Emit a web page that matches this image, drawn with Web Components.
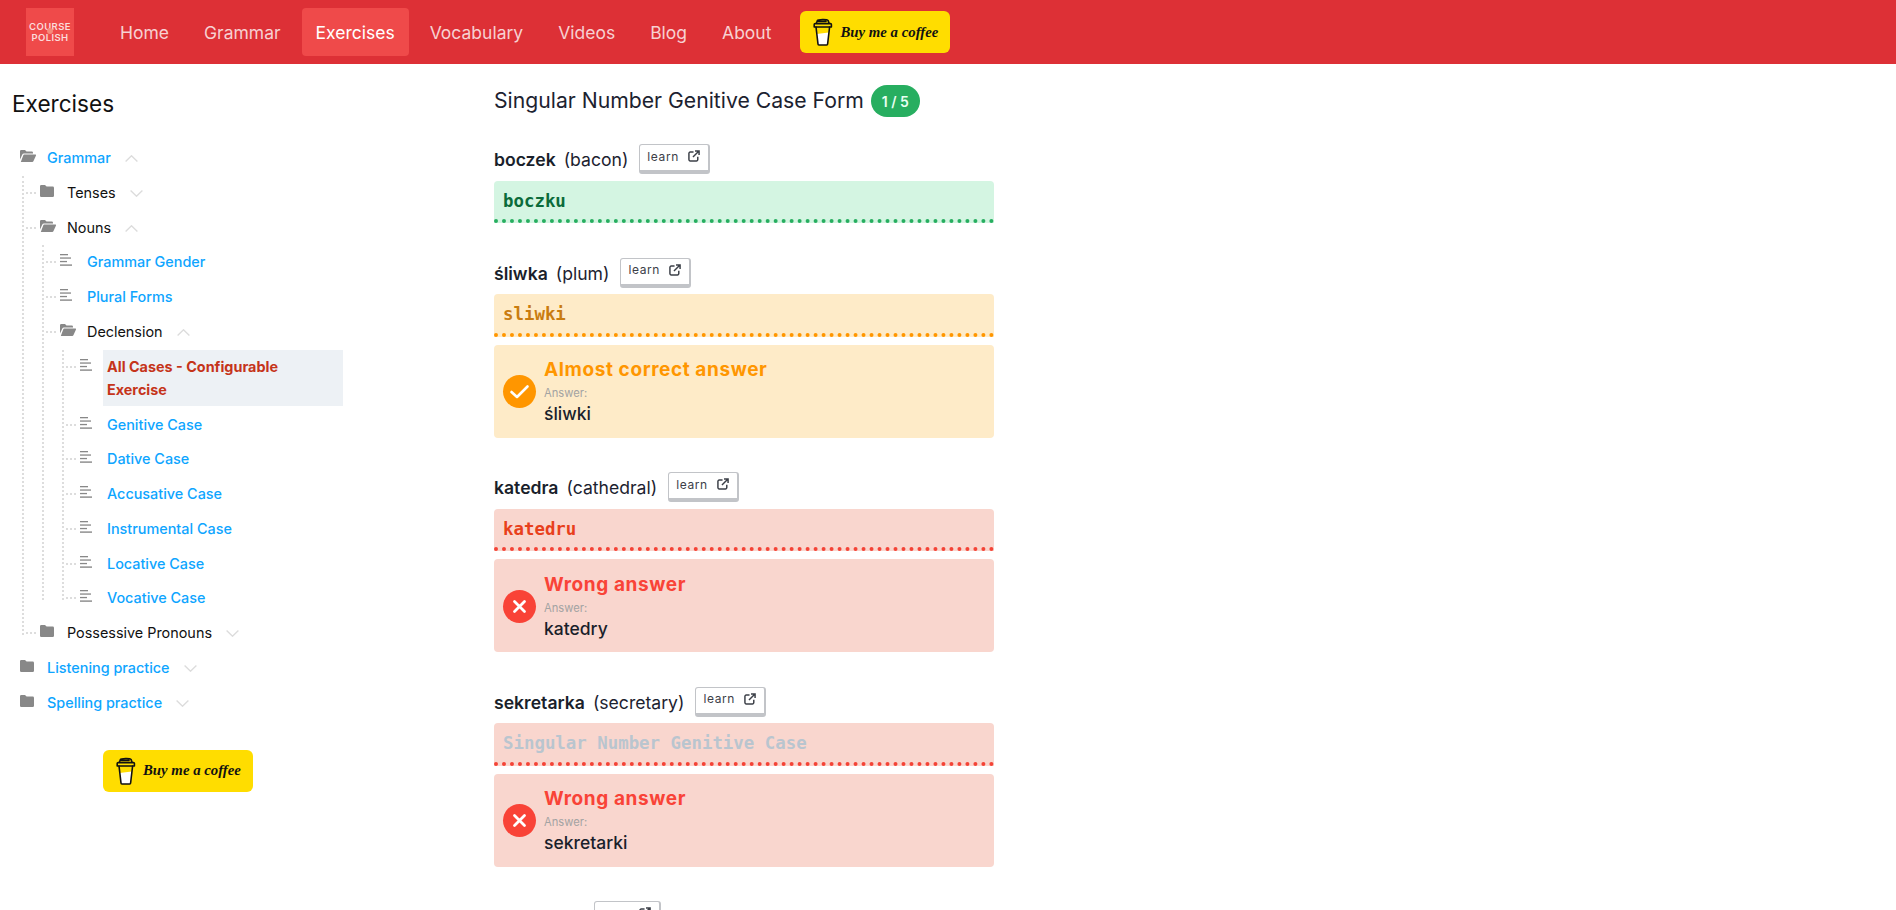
<!DOCTYPE html>
<html lang="en">
<head>
<meta charset="utf-8">
<title>Exercises - Course of Polish</title>
<style>
  html, body { margin: 0; padding: 0; background: #fff; }
  body { font-family: Inter, "Noto Sans", sans-serif; color: #1c2230; }
</style>
</head>
<body>
<app-page>
  <app-header slot="header">
    <nav-link>Home</nav-link>
    <nav-link>Grammar</nav-link>
    <nav-link active>Exercises</nav-link>
    <nav-link>Vocabulary</nav-link>
    <nav-link>Videos</nav-link>
    <nav-link>Blog</nav-link>
    <nav-link>About</nav-link>
  </app-header>

  <side-bar slot="side">
    <tree-node label="Grammar" link open root>
      <tree-node label="Tenses"></tree-node>
      <tree-node label="Nouns" open>
        <tree-node label="Grammar Gender" type="file" link></tree-node>
        <tree-node label="Plural Forms" type="file" link></tree-node>
        <tree-node label="Declension" open>
          <tree-node label="All Cases - Configurable Exercise" type="file" active></tree-node>
          <tree-node label="Genitive Case" type="file" link></tree-node>
          <tree-node label="Dative Case" type="file" link></tree-node>
          <tree-node label="Accusative Case" type="file" link></tree-node>
          <tree-node label="Instrumental Case" type="file" link></tree-node>
          <tree-node label="Locative Case" type="file" link></tree-node>
          <tree-node label="Vocative Case" type="file" link></tree-node>
        </tree-node>
      </tree-node>
      <tree-node label="Possessive Pronouns"></tree-node>
    </tree-node>
    <tree-node label="Listening practice" link root></tree-node>
    <tree-node label="Spelling practice" link root></tree-node>
  </side-bar>

  <exercise-list slot="main" title="Singular Number Genitive Case Form" progress="1 / 5">
    <exercise-item word="boczek" meaning="bacon" value="boczku" status="ok"></exercise-item>
    <exercise-item word="śliwka" meaning="plum" value="sliwki" status="almost" answer="śliwki"></exercise-item>
    <exercise-item word="katedra" meaning="cathedral" value="katedru" status="wrong" answer="katedry"></exercise-item>
    <exercise-item word="sekretarka" meaning="secretary" placeholder="Singular Number Genitive Case" status="wrong" answer="sekretarki"></exercise-item>
    <exercise-item style="--head-width: 89px; --learn-width: 67px"></exercise-item>
  </exercise-list>
</app-page>

<script>
const cupIcon = `
  <svg width="20" height="28" viewBox="0 0 20 28" fill="none" stroke="#111" stroke-width="1.6" stroke-linejoin="round" stroke-linecap="round">
    <path d="M3.5 16 L15.8 14.5 L14.6 26 a1 1 0 0 1 -1 1 H6 a1 1 0 0 1 -1 -1 Z" fill="#fff" stroke="none"/>
    <path d="M3 9 L5 26 a1 1 0 0 0 1 1 H13.6 a1 1 0 0 0 1 -1 L16.6 9"/>
    <path d="M1.2 9 H18.4 V6.6 a1 1 0 0 0 -1 -1 H2.2 a1 1 0 0 0 -1 1 Z"/>
    <path d="M3.5 5 L4.5 2.4 C5 1.4 14 1 15 2.4 L16 5 M5.5 3.4 H13"/>
  </svg>`;

class BuyCoffee extends HTMLElement {
  constructor() {
    super();
    this.attachShadow({ mode: "open" });
    this.shadowRoot.innerHTML = `
    <style>
      :host {
        display: inline-flex;
        align-items: center;
        gap: 7px;
        box-sizing: border-box;
        width: 150px;
        height: 42px;
        padding-left: 13px;
        background: #ffdd00;
        border-radius: 6px;
      }
      svg { display: block; flex: none; }
      span {
        font: italic 700 14.8px/1 "Liberation Serif", serif;
        color: #111;
        white-space: nowrap;
      }
    </style>
    ${cupIcon}<span>Buy me a coffee</span>`;
  }
}

class NavLink extends HTMLElement {
  constructor() {
    super();
    this.attachShadow({ mode: "open" });
    this.shadowRoot.innerHTML = `
    <style>
      :host {
        display: flex;
        align-items: center;
        height: 48px;
        padding: 0 14px;
        border-radius: 4px;
        font-size: 17.5px;
        color: rgba(255, 255, 255, 0.78);
      }
      :host([active]) {
        background: #ef4a4a;
        color: #fff;
      }
    </style>
    <slot></slot>`;
  }
}

class AppHeader extends HTMLElement {
  constructor() {
    super();
    this.attachShadow({ mode: "open" });
    this.shadowRoot.innerHTML = `
    <style>
      :host {
        display: flex;
        align-items: center;
        box-sizing: border-box;
        height: 64px;
        padding-left: 26px;
        background: #dd3036;
      }
      .logo {
        display: flex;
        flex-direction: column;
        align-items: center;
        justify-content: center;
        width: 48px;
        height: 48px;
        margin-right: 32px;
        background: #ef4a4a;
        color: #fbdcdc;
        font-size: 9.5px;
        font-weight: 600;
        line-height: 11px;
        letter-spacing: 0.4px;
        position: relative;
      }
      .logo i {
        position: absolute;
        left: 21px;
        top: 20px;
        width: 6px;
        height: 6px;
        border-radius: 50%;
        background: #f58a7a;
      }
      nav { display: flex; gap: 7px; }
      buy-coffee { margin-left: 15px; }
    </style>
    <div class="logo"><span>COURSE</span><i></i><span>POLISH</span></div>
    <nav><slot></slot></nav>
    <buy-coffee></buy-coffee>`;
  }
}

const folderClosed = `<svg width="14" height="12" viewBox="0 0 14 12" fill="#888"><path d="M1.3 0 H5 L6.6 1.6 H12.7 A1.3 1.3 0 0 1 14 2.9 V10.7 A1.3 1.3 0 0 1 12.7 12 H1.3 A1.3 1.3 0 0 1 0 10.7 V1.3 A1.3 1.3 0 0 1 1.3 0 Z"/></svg>`;
const folderOpen = `<svg width="16" height="12" viewBox="0 0 16 12" fill="#888"><path d="M0 1.2 A1.2 1.2 0 0 1 1.2 0 H5 L6.5 1.5 H11.8 A1.2 1.2 0 0 1 13 2.7 V3.6 H4 A2 2 0 0 0 2.2 4.8 L0 9.6 Z"/><path d="M4.2 4.6 H15.4 A0.6 0.6 0 0 1 16 5.4 L13.4 11.2 A1.2 1.2 0 0 1 12.3 12 H0.8 L3.2 5.4 A1.2 1.2 0 0 1 4.2 4.6 Z"/></svg>`;
const fileIcon = `<svg width="12" height="12" viewBox="0 0 12 12" fill="#888"><rect y="0" width="8" height="1.3"/><rect y="3.4" width="11" height="1.3"/><rect y="6.9" width="7" height="1.3"/><rect y="10.4" width="12" height="1.4"/></svg>`;
const chevDown = `<svg class="chev" width="13" height="7" viewBox="0 0 13 7" fill="none" stroke="#dcdcdc" stroke-width="1.4"><path d="M0.6 0.6 L6.5 6.2 L12.4 0.6"/></svg>`;
const chevUp = `<svg class="chev" width="13" height="7" viewBox="0 0 13 7" fill="none" stroke="#dcdcdc" stroke-width="1.4"><path d="M0.6 6.4 L6.5 0.8 L12.4 6.4"/></svg>`;

class TreeNode extends HTMLElement {
  connectedCallback() {
    if (this.shadowRoot) return;
    this.attachShadow({ mode: "open" });
    const isFile = this.getAttribute("type") === "file";
    const isOpen = this.hasAttribute("open");
    const icon = isFile ? fileIcon : isOpen ? folderOpen : folderClosed;
    const chev = isFile ? "" : isOpen ? chevUp : chevDown;

    this.shadowRoot.innerHTML = `
    <style>
      :host { display: block; }
      .row {
        position: relative;
        display: flex;
        align-items: flex-start;
        padding-bottom: 1.69px;
      }
      :host(:not([root])) .row::before {
        content: "";
        position: absolute;
        left: -14px;
        top: 16px;
        width: 10px;
        border-top: 2px dotted #ddd;
      }
      .icon { flex: none; width: 23px; padding-top: 9px; line-height: 0; }
      :host([type="file"]) .label { flex: 1; }
      .label {
        padding: 5px 4px;
        font-size: 14.4px;
        line-height: 23.1px;
        color: #111;
      }
      :host([link]) .label { color: #0ea5ff; font-weight: 500; }
      :host([active]) .label {
        background: #edf1f5;
        color: #c5341a;
        font-weight: 700;
        padding-right: 30px;
      }
      .chev { flex: none; margin: 14px 0 0 10px; }
      .kids { position: relative; padding-left: 20px; }
      .kids::before {
        content: "";
        position: absolute;
        left: 2px;
        top: 0;
        bottom: 16px;
        border-left: 2px dotted #ddd;
      }
      .kids:not(.has)::before { display: none; }
    </style>
    <div class="row">
      <span class="icon">${icon}</span>
      <span class="label">${this.getAttribute("label")}</span>
      ${chev}
    </div>
    <div class="kids ${this.children.length ? "has" : ""}"><slot></slot></div>`;
  }
}

class SideBar extends HTMLElement {
  constructor() {
    super();
    this.attachShadow({ mode: "open" });
    this.shadowRoot.innerHTML = `
    <style>
      :host { display: block; box-sizing: border-box; width: 494px; flex: none; padding-left: 12px; }
      h2 {
        margin: 0;
        padding-top: 24px;
        font-size: 22.6px;
        font-weight: 400;
        line-height: 32px;
        color: #111;
      }
      .tree { width: 331px; margin-top: 21px; padding-left: 8px; box-sizing: border-box; }
      .tip { width: 331px; padding: 29px 0 0 91px; box-sizing: border-box; }
    </style>
    <h2>Exercises</h2>
    <div class="tree"><slot></slot></div>
    <div class="tip"><buy-coffee></buy-coffee></div>`;
  }
}

class ExerciseList extends HTMLElement {
  constructor() {
    super();
    this.attachShadow({ mode: "open" });
  }

  connectedCallback() {
    this.shadowRoot.innerHTML = `
    <style>
      :host { display: block; box-sizing: border-box; width: 500px; flex: none; padding-top: 21px; }
      header { display: flex; align-items: center; gap: 7px; height: 32px; margin-bottom: 27px; }
      h1 { margin: 0 0 2px; font-size: 21.2px; font-weight: 400; color: #1c2230; white-space: nowrap; }
      .badge {
        display: flex;
        align-items: center;
        justify-content: center;
        width: 49px;
        height: 32px;
        flex: none;
        border-radius: 16px;
        background: #27ae60;
        color: #e9fff2;
        font-size: 14px;
        font-weight: 600;
      }
    </style>
    <header>
      <h1>${this.getAttribute("title")}</h1>
      <span class="badge">${this.getAttribute("progress")}</span>
    </header>
    <slot></slot>`;
  }
}

const statusStyles = {
  ok: { bg: "#d4f5e2", line: "#27ae60", text: "#0b6b3a" },
  almost: { bg: "#feebc8", line: "#ff9600", text: "#c97c10", title: "Almost correct answer" },
  wrong: { bg: "#f9d6ce", line: "#f44336", text: "#e8401c", title: "Wrong answer" },
};

class ExerciseItem extends HTMLElement {
  connectedCallback() {
    this.attachShadow({ mode: "open" });
    const word = this.getAttribute("word");
    const status = statusStyles[this.getAttribute("status")];
    const value = this.getAttribute("value");
    const placeholder = this.getAttribute("placeholder");

    const head = `
      <div class="head">
        <span class="words">${word ? `<b>${word}</b><span>(${this.getAttribute("meaning")})</span>` : ""}</span>
        <a class="learn">${word ? "learn" : ""}
          <svg width="12" height="12" viewBox="0 0 13 13" fill="none" stroke="#3c4048" stroke-width="1.6">
            <path d="M6 2.2 H2.4 A1.4 1.4 0 0 0 1 3.6 V10.4 A1.4 1.4 0 0 0 2.4 11.8 H9.2 A1.4 1.4 0 0 0 10.6 10.4 V7.2"/>
            <path d="M5.4 7.6 L11.6 1.4 M7.6 1 H12 V5.4"/>
          </svg>
        </a>
      </div>`;

    const feedback = status && status.title ? `
      <div class="feedback">
        <span class="mark">
          ${this.getAttribute("status") === "almost"
            ? `<svg width="33" height="33" viewBox="0 0 33 33" fill="none" stroke="#fff" stroke-width="2.6" stroke-linecap="round" stroke-linejoin="round"><path d="M8.5 17 L14 22 L24.5 11.5"/></svg>`
            : `<svg width="33" height="33" viewBox="0 0 33 33" fill="none" stroke="#fff" stroke-width="2.8" stroke-linecap="round"><path d="M11.5 11.5 L21.5 21.5 M21.5 11.5 L11.5 21.5"/></svg>`}
        </span>
        <div>
          <div class="title">${status.title}</div>
          <div class="cap">Answer:</div>
          <div class="answer">${this.getAttribute("answer")}</div>
        </div>
      </div>` : "";

    this.shadowRoot.innerHTML = `
    <style>
      :host { display: block; margin-bottom: 34.5px; }
      .head { display: flex; align-items: center; height: 30.5px; margin-bottom: 6px; }
      .words {
        display: flex;
        gap: 8px;
        min-width: var(--head-width, 0);
        margin-right: 11px;
        padding-top: 1px;
        font-size: 17.6px;
        white-space: nowrap;
      }
      .words b { font-weight: 600; color: #1a1f2b; }
      .learn {
        display: flex;
        align-items: center;
        justify-content: flex-end;
        gap: 9px;
        box-sizing: border-box;
        width: var(--learn-width, auto);
        height: 30px;
        padding: 0 8px 3px 7px;
        border: 1px solid #c2c4c8;
        border-right-width: 2.5px;
        border-bottom-width: 4px;
        border-radius: 3px;
        font-size: 12px;
        letter-spacing: 0.6px;
        color: #3c4048;
      }
      .input {
        box-sizing: border-box;
        height: 42.5px;
        padding: 8px 9px 0;
        border-bottom: 4px dotted ${status ? status.line : "#ccc"};
        border-radius: 4px 4px 0 0;
        background: ${status ? status.bg : "#fff"};
        font: 700 17.4px/24px "DejaVu Sans Mono", "Liberation Mono", monospace;
        color: ${status ? status.text : "#222"};
        white-space: pre;
      }
      .input.empty { color: #b9c5cf; }
      .feedback {
        display: flex;
        align-items: center;
        gap: 8px;
        box-sizing: border-box;
        height: 93px;
        margin-top: 8px;
        padding-left: 9px;
        border-radius: 4px;
        background: ${status ? status.bg : "#fff"};
      }
      .mark {
        flex: none;
        width: 33px;
        height: 33px;
        margin-top: 1px;
        border-radius: 50%;
        background: ${status ? (status.title === "Wrong answer" ? "#f94337" : status.line) : "none"};
      }
      .mark svg { display: block; }
      .title {
        margin-top: 1px;
        font-size: 19px;
        font-weight: 700;
        line-height: 24px;
        letter-spacing: 0.6px;
        color: ${status ? (status.title === "Wrong answer" ? "#f94337" : status.line) : "#000"};
      }
      .cap { margin-top: 4px; font-size: 11.2px; line-height: 14px; color: #a3a3a3; }
      .answer { margin-top: 3px; font-size: 17.5px; font-weight: 500; line-height: 22px; color: #1a1f2b; }
    </style>
    ${head}
    ${status ? `<div class="input ${value ? "" : "empty"}">${value || placeholder}</div>` : ""}
    ${feedback}`;
  }
}

class AppPage extends HTMLElement {
  constructor() {
    super();
    this.attachShadow({ mode: "open" });
    this.shadowRoot.innerHTML = `
    <style>
      :host { display: block; height: 100vh; overflow: hidden; }
      main { display: flex; }
    </style>
    <slot name="header"></slot>
    <main><slot name="side"></slot><slot name="main"></slot></main>`;
  }
}

window.customElements.define("buy-coffee", BuyCoffee);
window.customElements.define("nav-link", NavLink);
window.customElements.define("app-header", AppHeader);
window.customElements.define("tree-node", TreeNode);
window.customElements.define("side-bar", SideBar);
window.customElements.define("exercise-item", ExerciseItem);
window.customElements.define("exercise-list", ExerciseList);
window.customElements.define("app-page", AppPage);
</script>
</body>
</html>
